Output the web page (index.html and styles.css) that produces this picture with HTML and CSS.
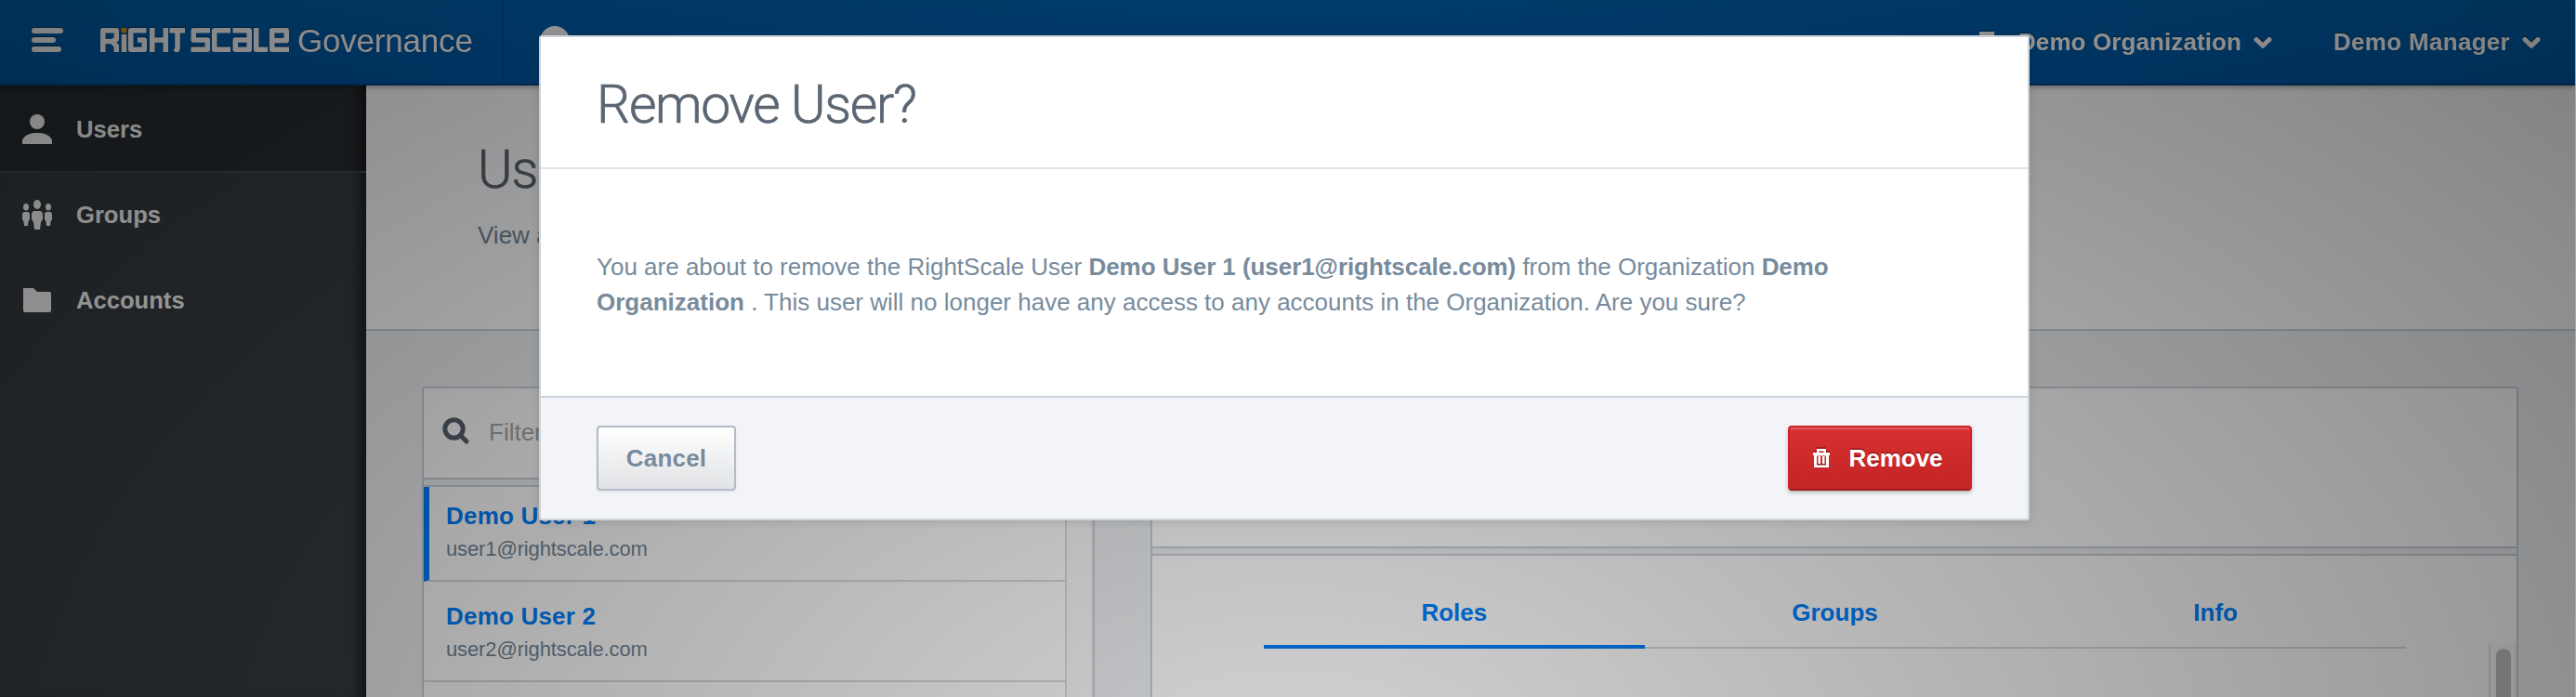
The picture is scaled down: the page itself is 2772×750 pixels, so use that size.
FILE: index.html
```html
<!DOCTYPE html>
<html lang="en">
<head>
<meta charset="utf-8">
<title>RightScale Governance</title>
<link rel="stylesheet" href="styles.css">
</head>
<body>
<div class="app">
  <header class="topbar">
    <div class="brand">
      <svg class="menu" width="34" height="26" viewBox="0 0 34 26"><rect width="34" height="6" rx="3"/><rect y="10" width="26" height="6" rx="3"/><rect y="20" width="32" height="6" rx="3"/></svg>
      <svg class="logo" width="204" height="26" viewBox="0 0 204 26">
        <g fill="none" stroke="#fff" stroke-width="5.500" stroke-linejoin="round">
          <path d="M2.750 26V2.750H17.250V12.500L12 14.500L17.250 19V26M3 14.500H13"/>
          <path d="M25.500 7V26"/>
          <path d="M49.500 2.750H32.750V23.250H47.250V13H40"/>
          <path d="M55.750 0V26M70.250 0V26M56 13H70"/>
          <path d="M74.500 2.750H91M83 3V22L81 26"/>
          <path d="M118 2.750H100.250V13H115.250V23.250H97.500"/>
          <path d="M140 2.750H122.750V23.250H140"/>
          <path d="M142.500 2.750H160.250V23.250H145.250V13H160"/>
          <path d="M167.750 0V23.250H180"/>
          <path d="M203 23.250H184.750V2.750H200.250V13.500H185"/>
        </g>
        <path fill="#f90" d="M22.500 0H28V5L25.500 6L22.500 3.500Z"/>
      </svg>
      <span class="product">Governance</span>
    </div>
    <svg class="globe" width="32" height="32" viewBox="0 0 32 32"><circle cx="16" cy="16" r="16"/></svg>
    <nav class="topnav">
      <span class="org"><svg class="ico" width="32" height="32" viewBox="0 0 32 32"><path d="M8 0H24V10H20V14H30V24H24V18H8V24H2V14H12V10H8Z"/></svg>Demo Organization<svg class="chev" width="20" height="14" viewBox="0 0 20 14"><path d="M3 3.500L10 10.300L17 3.500"/></svg></span>
      <span class="mgr">Demo Manager<svg class="chev" width="20" height="14" viewBox="0 0 20 14"><path d="M3 3.500L10 10.300L17 3.500"/></svg></span>
    </nav>
  </header>
  <div class="main">
    <aside class="side">
      <div class="item active"><svg width="32" height="32" viewBox="0 0 32 32"><circle cx="16" cy="8" r="8"/><path d="M0 32V28C2 22.500 8 20 16 20S30 22.500 32 28V32Z"/></svg>Users</div>
      <div class="item"><svg width="32" height="32" viewBox="0 0 32 32"><ellipse cx="4" cy="7.800" rx="3" ry="3.800"/><ellipse cx="28" cy="7.800" rx="3" ry="3.800"/><ellipse cx="16" cy="5" rx="4" ry="5"/><path d="M0 16Q0 13 2.500 13H5.500Q8 13 8 16V21L6.500 23.500L6 28H2L1.500 23.500L0 21ZM24 16Q24 13 26.500 13H29.500Q32 13 32 16V21L30.500 23.500L30 28H26L25.500 23.500L24 21ZM10 16Q10 12 13.500 12H18.500Q22 12 22 16V21L20 24L19 32H13L12 24L10 21Z"/></svg>Groups</div>
      <div class="item"><svg width="32" height="26" viewBox="0 0 32 26"><path d="M2 0H12L16 4H29.500Q31 4 31 6V24Q31 26 29 26H3Q1 26 1 24V1Q1 0 2 0Z"/></svg>Accounts</div>
    </aside>
    <section class="content">
      <div class="pagehead"><h1>Users</h1><p>View and manage users</p></div>
      <div class="panels">
        <div class="list">
          <div class="filter"><svg width="30" height="30" viewBox="0 0 30 30"><circle cx="12.500" cy="12.500" r="9.700"/><path d="M20 20L26 26"/></svg><span>Filter</span></div>
          <div class="rows">
            <div class="users">
              <div class="user sel"><b>Demo User 1</b><span>user1@rightscale.com</span></div>
              <div class="user"><b>Demo User 2</b><span>user2@rightscale.com</span></div>
            </div>
            <div class="track"></div>
          </div>
        </div>
        <div class="detail">
          <div class="dhead">Demo User 1</div>
          <div class="dbody">
            <div class="tabs"><span class="tab on">Roles</span><span class="tab">Groups</span><span class="tab">Info</span></div>
            <div class="scroll"><i></i></div>
          </div>
        </div>
      </div>
    </section>
  </div>
</div>
<div class="shade"></div>
<div class="modal">
  <div class="mhead">Remove User?</div>
  <div class="mbody">
    <p class="line l1">You are about to remove the RightScale User <b>Demo User 1 (user1@rightscale.com)</b> from the Organization <b>Demo</b></p>
    <p class="line l2"><b>Organization</b> . This user will no longer have any access to any accounts in the Organization. Are you sure?</p>
  </div>
  <div class="mfoot">
    <button class="btn cancel">Cancel</button>
    <button class="btn remove"><svg width="18" height="20" viewBox="0 0 18 20"><path fill-rule="evenodd" d="M4 0H14V4H18V7H17V20H1V7H0V4H4ZM6.500 2.500V4H11.500V2.500ZM4 7.500V17.500H14V7.500ZM5.500 8H8V16H5.500ZM10 8H12.500V16H10Z"/></svg>Remove</button>
  </div>
</div>
</body>
</html>
```
FILE: styles.css
```css
* { box-sizing: border-box; }
html, body { margin: 0; width: 2772px; height: 750px; overflow: hidden; }
body { font-family: "Liberation Sans", Arial, sans-serif; background: #aaa; }
h1, p { margin: 0; font-weight: 400; }
.app { width: 2771px; height: 750px; display: flex; flex-direction: column; overflow: hidden; }
.topbar { position: relative; z-index: 2; flex: none; height: 92px; display: flex; align-items: center; color: #fff; fill: #fff; background: linear-gradient(#0063b0, #0057a5); border-bottom: 2px solid #004683; box-shadow: 0 1px 6px rgba(0,0,0,.4); }
.brand { flex: none; width: 542px; height: 100%; padding-left: 34px; display: flex; align-items: center; border-right: 1px solid #004a8f; }
.menu { margin-top: -4px; }
.logo { margin: -4px 0 0 40px; }
.product { margin: -2px 0 0 8px; font-size: 35px; letter-spacing: -.2px; }
.menu, .logo, .product, .topnav span { filter: drop-shadow(0 -1px 0 rgba(0,0,0,.4)); }
.globe { margin: -3px 0 0 39px; }
.topnav { margin-left: auto; padding-right: 37px; display: flex; gap: 66px; font-size: 26px; letter-spacing: .1px; font-weight: 700; }
.mgr { letter-spacing: .3px; }
.topnav span { display: flex; align-items: center; }
.ico { margin: 10px 18px 0 0; }
.chev { margin: 2px 0 0 13px; fill: none; stroke: #fff; stroke-width: 5; stroke-linecap: round; stroke-linejoin: round; }
.main { flex: 1; display: flex; min-height: 0; }
.side { flex: none; width: 394px; background: #363c42; color: #fff; fill: #fff; box-shadow: inset -14px 0 14px -8px rgba(0,0,0,.55); }
.item { height: 92px; padding-left: 24px; display: flex; align-items: center; gap: 26px; font-size: 25.600px; font-weight: 700; }
.item.active { height: 94px; padding-top: 2px; background: rgba(0,0,0,.25); border-bottom: 2px solid #3e464c; margin-bottom: -1px; }
.content { flex: 1; background: #eff1f4; display: flex; flex-direction: column; min-width: 0; }
.pagehead { flex: none; height: 264px; padding: 62px 0 0 120px; background: #fff; border-bottom: 2px solid #c9d0d8; }
.pagehead h1 { font: 300 57px/58px Roboto, sans-serif; letter-spacing: -.9px; -webkit-text-stroke: .7px; color: #5a6672; }
.pagehead p { margin-top: 26px; font-size: 26px; line-height: 30px; color: #73879a; white-space: nowrap; }
.panels { flex: 1; min-height: 0; padding: 60px 61px 0 60px; display: flex; gap: 60px; }
.list, .detail { border: 2px solid #c9d0d8; border-bottom: 0; border-radius: 3px 3px 0 0; background: #fff; display: flex; flex-direction: column; }
.list { width: 724px; }
.detail { flex: 1; }
.filter { flex: none; height: 98px; padding: 0 0 2px 20px; display: flex; align-items: center; gap: 20px; border-bottom: 2px solid #c9d0d8; font-size: 26px; color: #a9a9a9; }
.filter svg { fill: none; stroke: #56616e; stroke-width: 5; stroke-linecap: round; margin-top: -2px; }
.rows { flex: 1; min-height: 0; margin-top: 6px; display: flex; border-top: 2px solid #c9d0d8; box-shadow: 0 -6px 0 #eff1f4; }
.users { flex: 1; }
.track { width: 30px; background: #fbfbfb; border-left: 2px solid #dedede; border-right: 2px solid #f0f0f0; }
.user { height: 108px; padding: 23px 0 0 24px; border-bottom: 2px solid #d6dade; display: flex; flex-direction: column; }
.user.sel { height: 102px; border-left: 6px solid #0080ff; padding: 17px 0 0 18px; }
.user b { font-size: 26px; line-height: 29px; letter-spacing: .2px; color: #0080ff; }
.user span { margin-top: 8px; font-size: 22px; line-height: 25px; letter-spacing: -.12px; color: #73879a; }
.dhead { flex: none; height: 172px; padding: 80px 0 0 64px; border-bottom: 2px solid #c9d0d8; font: 300 57px/58px Roboto, sans-serif; color: #5a6672; }
.dbody { flex: 1; min-height: 0; margin-top: 6px; border-top: 2px solid #c9d0d8; display: flex; justify-content: space-between; box-shadow: 0 -6px 0 #eff1f4; }
.tabs { margin-left: 120px; width: 1229px; height: 100px; display: flex; border-bottom: 2px solid #d6dade; }
.tab { flex: 1; height: 100px; padding-top: 47px; font-size: 26px; line-height: 29px; font-weight: 700; text-align: center; color: #0080ff; }
.tab.on { border-bottom: 4px solid #0080ff; }
.scroll { margin-top: 94px; width: 30px; background: #fafafa; border-left: 2px solid #e4e4e4; border-right: 2px solid #f0f0f0; padding: 6px 0 0 6px; display: flex; }
.scroll i { width: 16px; border-radius: 8px 8px 0 0; background: #c1c1c1; }
.shade { position: absolute; z-index: 5; left: 0; top: 0; width: 2771px; height: 750px; background: radial-gradient(ellipse 1960px 1200px at 1386px 850px, rgba(0,0,0,.2) 10%, rgba(0,0,0,.5) 100%); }
.modal { position: absolute; z-index: 6; left: 580px; top: 38px; width: 1604px; height: 522px; border: 2px solid #cdd3db; border-radius: 3px; background: #fff; display: flex; flex-direction: column; box-shadow: 0 2px 10px rgba(0,0,0,.12); }
.mhead { height: 142px; padding: 38px 0 0 60px; border-bottom: 2px solid #e0e3e8; font: 300 57px/70px Roboto, sans-serif; letter-spacing: -1.300px; -webkit-text-stroke: .7px; color: #5a6672; }
.mbody { flex: 1; padding: 86px 0 0 60px; color: #778b9c; font-size: 26px; }
.line { line-height: 38px; white-space: nowrap; }
.l1 b { letter-spacing: -.06px; }
.mfoot { flex: none; height: 132px; border-top: 2px solid #cdd3db; background: #f3f4f7; padding: 30px 60px 0; display: flex; justify-content: space-between; align-items: flex-start; }
.btn { height: 70px; padding: 0; border-radius: 4px; font: 700 26px "Liberation Sans", sans-serif; display: flex; align-items: center; justify-content: center; }
.cancel { width: 150px; border: 2px solid #b2bbc8; background: linear-gradient(#fff, #e1e2e5); color: #778b9c; box-shadow: 0 2px 3px rgba(0,0,0,.05); letter-spacing: .2px; }
.remove { width: 198px; padding-right: 4px; border: 2px solid #cf2228; border-bottom-color: #a01c20; background: linear-gradient(#d93030, #c22424); color: #fff; gap: 20px; box-shadow: inset 0 2px 0 #e05a5c, 0 2px 4px rgba(0,0,0,.25); text-shadow: 0 -2px 0 rgba(0,0,0,.25); }
.remove svg { fill: #fff; filter: drop-shadow(0 -2px 0 rgba(0,0,0,.25)); }
```
